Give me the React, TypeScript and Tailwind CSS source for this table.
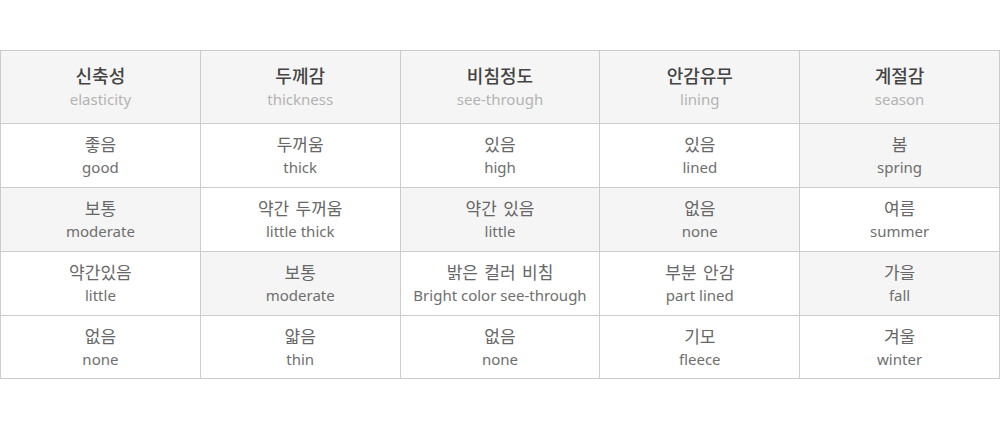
const headers = [
  { ko: '신축성', en: 'elasticity' },
  { ko: '두께감', en: 'thickness' },
  { ko: '비침정도', en: 'see-through' },
  { ko: '안감유무', en: 'lining' },
  { ko: '계절감', en: 'season' },
];

type Cell = { ko: string; en: string; on?: boolean };

const rows: Cell[][] = [
  [
    { ko: '좋음', en: 'good' },
    { ko: '두꺼움', en: 'thick' },
    { ko: '있음', en: 'high' },
    { ko: '있음', en: 'lined' },
    { ko: '봄', en: 'spring', on: true },
  ],
  [
    { ko: '보통', en: 'moderate', on: true },
    { ko: '약간 두꺼움', en: 'little thick' },
    { ko: '약간 있음', en: 'little', on: true },
    { ko: '없음', en: 'none', on: true },
    { ko: '여름', en: 'summer' },
  ],
  [
    { ko: '약간있음', en: 'little' },
    { ko: '보통', en: 'moderate', on: true },
    { ko: '밝은 컬러 비침', en: 'Bright color see-through' },
    { ko: '부분 안감', en: 'part lined' },
    { ko: '가을', en: 'fall', on: true },
  ],
  [
    { ko: '없음', en: 'none' },
    { ko: '얇음', en: 'thin' },
    { ko: '없음', en: 'none' },
    { ko: '기모', en: 'fleece' },
    { ko: '겨울', en: 'winter' },
  ],
];

export default function App() {
  return (
    <div className="w-[1000px] h-[429px] bg-white font-['Noto_Sans','Noto_Sans_CJK_KR',sans-serif] pt-[50px]">
      <div className="grid grid-cols-5 border-l border-t border-[#cccccc]">
        {headers.map((h, i) => (
          <div
            key={i}
            className="h-[73px] flex flex-col items-center justify-center bg-[#f5f5f5] border-r border-b border-[#cccccc]"
          >
            <p className="text-[18px] leading-[24px] font-medium text-[#444444]">{h.ko}</p>
            <p className="text-[15px] leading-[22px] text-[#b3b3b3]">{h.en}</p>
          </div>
        ))}
        {rows.map((row, r) =>
          row.map((c, i) => (
            <div
              key={`${r}-${i}`}
              className={`${r === 3 ? 'h-[63px]' : 'h-[64px]'} flex flex-col items-center justify-center border-r border-b border-[#cccccc] ${c.on ? 'bg-[#f5f5f5]' : 'bg-white'}`}
            >
              <p className="text-[17px] leading-[23px] text-[#666666] [word-spacing:2px]">{c.ko}</p>
              <p className="text-[15px] leading-[22px] text-[#6e6e6e]">{c.en}</p>
            </div>
          ))
        )}
      </div>
    </div>
  );
}
